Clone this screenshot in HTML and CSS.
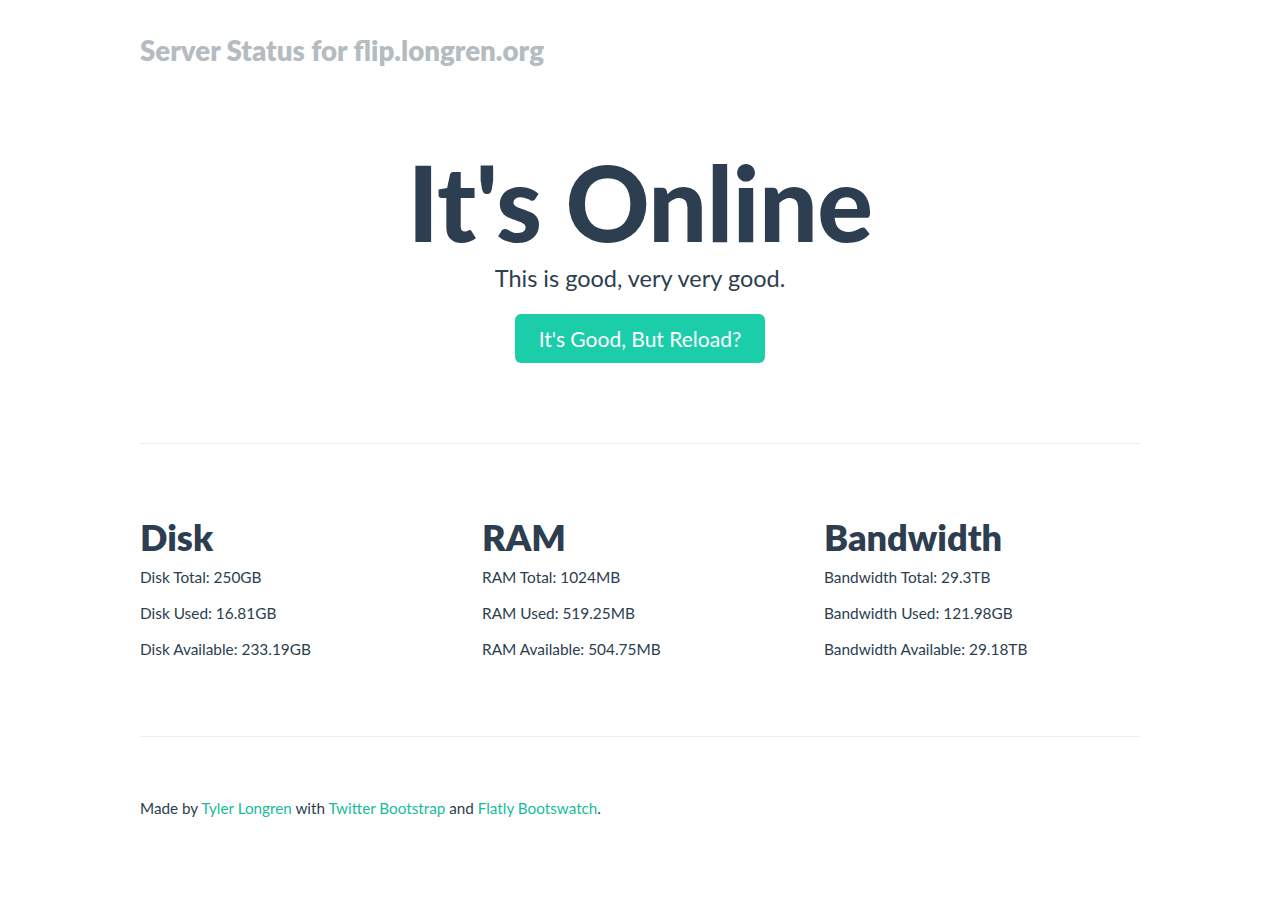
FILE: index.html
```html
<!DOCTYPE html>
<html lang="en">
<head>
<meta charset="utf-8">
<title>Server Status for flip.longren.org</title>
<link rel="stylesheet" href="styles.css">
</head>
<body>
<div class="container">
  <header class="masthead">
    <h3 class="muted">Server Status for flip.longren.org</h3>
  </header>

  <section class="jumbotron">
    <h1>It's Online</h1>
    <p class="lead">This is good, very very good.</p>
    <a class="btn-success" href="#">It's Good, But Reload?</a>
  </section>

  <hr class="rule rule-top">

  <section class="stats">
    <div class="stat">
      <h2>Disk</h2>
      <p>Disk Total: 250GB</p>
      <p>Disk Used: 16.81GB</p>
      <p>Disk Available: 233.19GB</p>
    </div>
    <div class="stat">
      <h2>RAM</h2>
      <p>RAM Total: 1024MB</p>
      <p>RAM Used: 519.25MB</p>
      <p>RAM Available: 504.75MB</p>
    </div>
    <div class="stat">
      <h2>Bandwidth</h2>
      <p>Bandwidth Total: 29.3TB</p>
      <p>Bandwidth Used: 121.98GB</p>
      <p>Bandwidth Available: 29.18TB</p>
    </div>
  </section>

  <hr class="rule rule-bottom">

  <footer class="footer">
    <p>Made by <a href="#">Tyler Longren</a> with <a href="#">Twitter Bootstrap</a> and <a href="#">Flatly Bootswatch</a>.</p>
  </footer>
</div>
</body>
</html>
```

FILE: styles.css
```css
html, body {
  margin: 0;
  padding: 0;
  background: #ffffff;
}
body {
  font-family: Lato, "Open Sans", "Liberation Sans", sans-serif;
  font-size: 15.4px;
  line-height: 21px;
  color: #2c3e50;
}
.container {
  width: 1000px;
  margin: 0 auto;
}
.masthead {
  padding-top: 36px;
}
.muted {
  margin: 0;
  font-size: 27.7px;
  line-height: 30.8px;
  font-weight: 800;
  color: #b4bcc2;
}
.jumbotron {
  text-align: center;
  margin-top: 83px;
}
.jumbotron h1 {
  margin: 0;
  font-size: 104px;
  line-height: 104px;
  font-weight: 900;
  letter-spacing: -0.6px;
}
.lead {
  margin: 8px 0 0;
  font-size: 23.5px;
  line-height: 33px;
  font-weight: 400;
}
.btn-success {
  display: inline-block;
  margin-top: 19.6px;
  padding: 0 24px;
  height: 49px;
  line-height: 49px;
  font-size: 21px;
  color: #ffffff;
  background: #1ccdaa;
  border-radius: 6px;
  text-decoration: none;
}
.rule {
  margin: 0;
  border: 0;
  border-top: 1px solid #eceeef;
  height: 0;
}
.rule-top {
  margin-top: 80px;
}
.rule-bottom {
  margin-top: 76.5px;
}
.stats {
  display: grid;
  grid-template-columns: repeat(3, 1fr);
  column-gap: 26px;
  margin-top: 71.5px;
}
.stat h2 {
  margin: 0 0 8px;
  font-size: 36.1px;
  line-height: 43px;
  font-weight: 800;
}
.stat p {
  margin: 0 0 15px;
}
.stat p:last-child {
  margin-bottom: 0;
}
.footer {
  margin-top: 61px;
}
.footer p {
  margin: 0;
  font-size: 15.25px;
}
.footer a {
  color: #18bc9c;
  text-decoration: none;
}
```
